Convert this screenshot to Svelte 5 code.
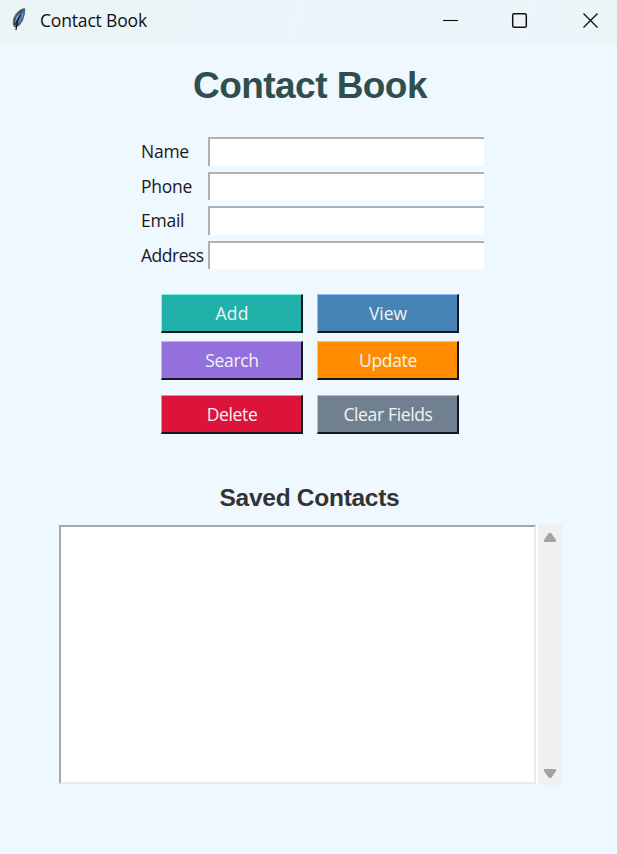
<script>
  const fields = ['Name', 'Phone', 'Email', 'Address'];
  const buttons = [
    { label: 'Add', kind: 'add' },
    { label: 'View', kind: 'view' },
    { label: 'Search', kind: 'search' },
    { label: 'Update', kind: 'update' },
    { label: 'Delete', kind: 'delete' },
    { label: 'Clear Fields', kind: 'clear' }
  ];
</script>

<div class="window">
  <header>
    <svg class="feather" width="16" height="26" viewBox="0 0 16 26">
      <path d="M13.500 1C9 1.500 4 6.500 2.200 11.500L1.700 17L3 20L5.500 20.500L9 18L12 13.500L14 6.500L14.300 2Z" fill="#60686e" />
      <path d="M12.800 2C9 3.500 4.500 8.500 3.200 13.500L3.300 18.500L7.500 17.500L10.800 13L13 6Z" fill="#2b3f58" />
      <path d="M12.800 2.500L9.200 8L6.500 17.200L9.800 14.500L12.500 8.500Z" fill="#4c8ad6" />
      <path d="M10 4.500L5.300 10L3.500 16.500L6.300 12Z" fill="#94b2d0" />
      <path d="M9.500 8L6.500 13.500L5 23" fill="none" stroke="#141a22" stroke-width="1.300" />
    </svg>
    <span class="caption">Contact Book</span>
    <svg class="controls" width="160" height="20" viewBox="0 0 160 20" fill="none" stroke="#111">
      <path d="M3 10.500H18" stroke-width="1.100" />
      <rect x="72.700" y="3.700" width="13.600" height="13.600" rx="1.500" stroke-width="1.500" />
      <path d="M143.500 3.500L157.500 17.500M157.500 3.500L143.500 17.500" stroke-width="1.400" />
    </svg>
  </header>

  <h1>Contact Book</h1>

  <div class="form">
    {#each fields as field}
      <label><span class={field.toLowerCase()}>{field}</span><input type="text" /></label>
    {/each}
  </div>

  <div class="buttons">
    {#each buttons as b}
      <button class={b.kind}>{b.label}</button>
    {/each}
  </div>

  <h2>Saved Contacts</h2>

  <div class="saved">
    <div class="list"></div>
    <div class="scrollbar">
      <svg width="14" height="11" viewBox="0 0 14 11"><path d="M5.500 1.500Q7 0 8.500 1.500L13 8Q13.500 9.800 12 10H2Q.500 9.800 1 8Z" fill="#a3a3a3" /></svg>
      <svg width="14" height="11" viewBox="0 0 14 11"><path d="M5.500 9.500Q7 11 8.500 9.500L13 3Q13.500 1.200 12 1H2Q.500 1.200 1 3Z" fill="#a3a3a3" /></svg>
    </div>
  </div>
</div>

<style>
  :global(body) { margin: 0; }
  .window {
    width: 617px;
    height: 854px;
    overflow: hidden;
    background: #eff7ff;
    font-family: 'Open Sans', 'Noto Sans', sans-serif;
    color: #1b1722;
  }
  header {
    box-sizing: border-box;
    height: 44px;
    padding-left: 11px;
    display: flex;
    align-items: flex-start;
    background: linear-gradient(100deg, #ebf4f6 0%, #ecf4f8 25%, #edf5fc 48%, #ebf4f8 68%, #edf5fb 85%, #ebf4f6 100%);
  }
  .feather { margin-top: 7px; }
  .caption {
    margin-left: 13px;
    font-size: 17.500px;
    letter-spacing: -0.170px;
    line-height: 24px;
    margin-top: 8px;
    color: #111;
    white-space: nowrap;
  }
  .controls { margin: 10px 17px 0 auto; }
  h1 {
    margin: 20px 0 0 3px;
    height: 44px;
    text-align: center;
    font: bold 37px/44px 'Liberation Sans', Arial, sans-serif;
    letter-spacing: -0.550px;
    color: #2f4f4f;
  }
  .form {
    margin: 29px 0 0 141px;
    display: flex;
    flex-direction: column;
    gap: 5.500px;
  }
  label { display: flex; height: 29px; }
  label span {
    width: 67px;
    font-size: 17.500px;
    letter-spacing: -0.250px;
    line-height: 28px;
    white-space: nowrap;
  }
  label .address { letter-spacing: -0.500px; }
  input {
    box-sizing: border-box;
    width: 276px;
    height: 28.500px;
    padding: 2px 4px;
    border: 0 solid #b1b1b3;
    border-width: 2px 0 0 2px;
    border-radius: 0;
    background: #fff;
    outline: none;
  }
  .buttons {
    margin: 24px 0 0 161px;
    display: grid;
    grid-template-columns: 142px 142px;
    grid-template-rows: 39px 39px 39px;
    column-gap: 14px;
    row-gap: 8px;
  }
  button {
    box-sizing: border-box;
    padding: 1px 0 0 1px;
    border: 1.500px solid;
    border-right-width: 2px;
    border-bottom-width: 2px;
    border-color: var(--light) #111820 #111820 var(--light);
    background: var(--face);
    color: #f0f4f5;
    font: 17.500px 'Open Sans', 'Noto Sans', sans-serif;
    letter-spacing: -0.350px;
    white-space: nowrap;
  }
  .add { --face: #20b2aa; --light: #79f5e7; letter-spacing: 0.200px; }
  .view { --face: #4682b4; --light: #8fbdff; letter-spacing: 0; }
  .search { --face: #9370db; --light: #c8aaff; }
  .update { --face: #ff8c00; --light: #ffc572; }
  .delete { --face: #dc143c; --light: #ff849a; }
  .clear { --face: #708090; --light: #b0bfcc; }
  .delete, .clear { margin-top: 7px; margin-bottom: -7px; }
  h2 {
    margin: 56px 0 0 2px;
    font: bold 24.500px/30px 'Liberation Sans', Arial, sans-serif;
    letter-spacing: -0.280px;
    text-align: center;
    color: #333;
  }
  .saved { margin: 11px 0 0 59px; display: flex; }
  .list {
    box-sizing: border-box;
    width: 477px;
    height: 259px;
    margin-top: 1px;
    border: 2px solid;
    border-color: #a6a6a6 #e9e9e9 #e9e9e9 #a6a6a6;
    background: #fff;
  }
  .scrollbar {
    box-sizing: border-box;
    width: 26px;
    height: 261px;
    padding: 8px 0 6px;
    border-left: 2px solid #fff;
    background: #f0f0f0;
    display: flex;
    flex-direction: column;
    align-items: center;
    justify-content: space-between;
  }
</style>
